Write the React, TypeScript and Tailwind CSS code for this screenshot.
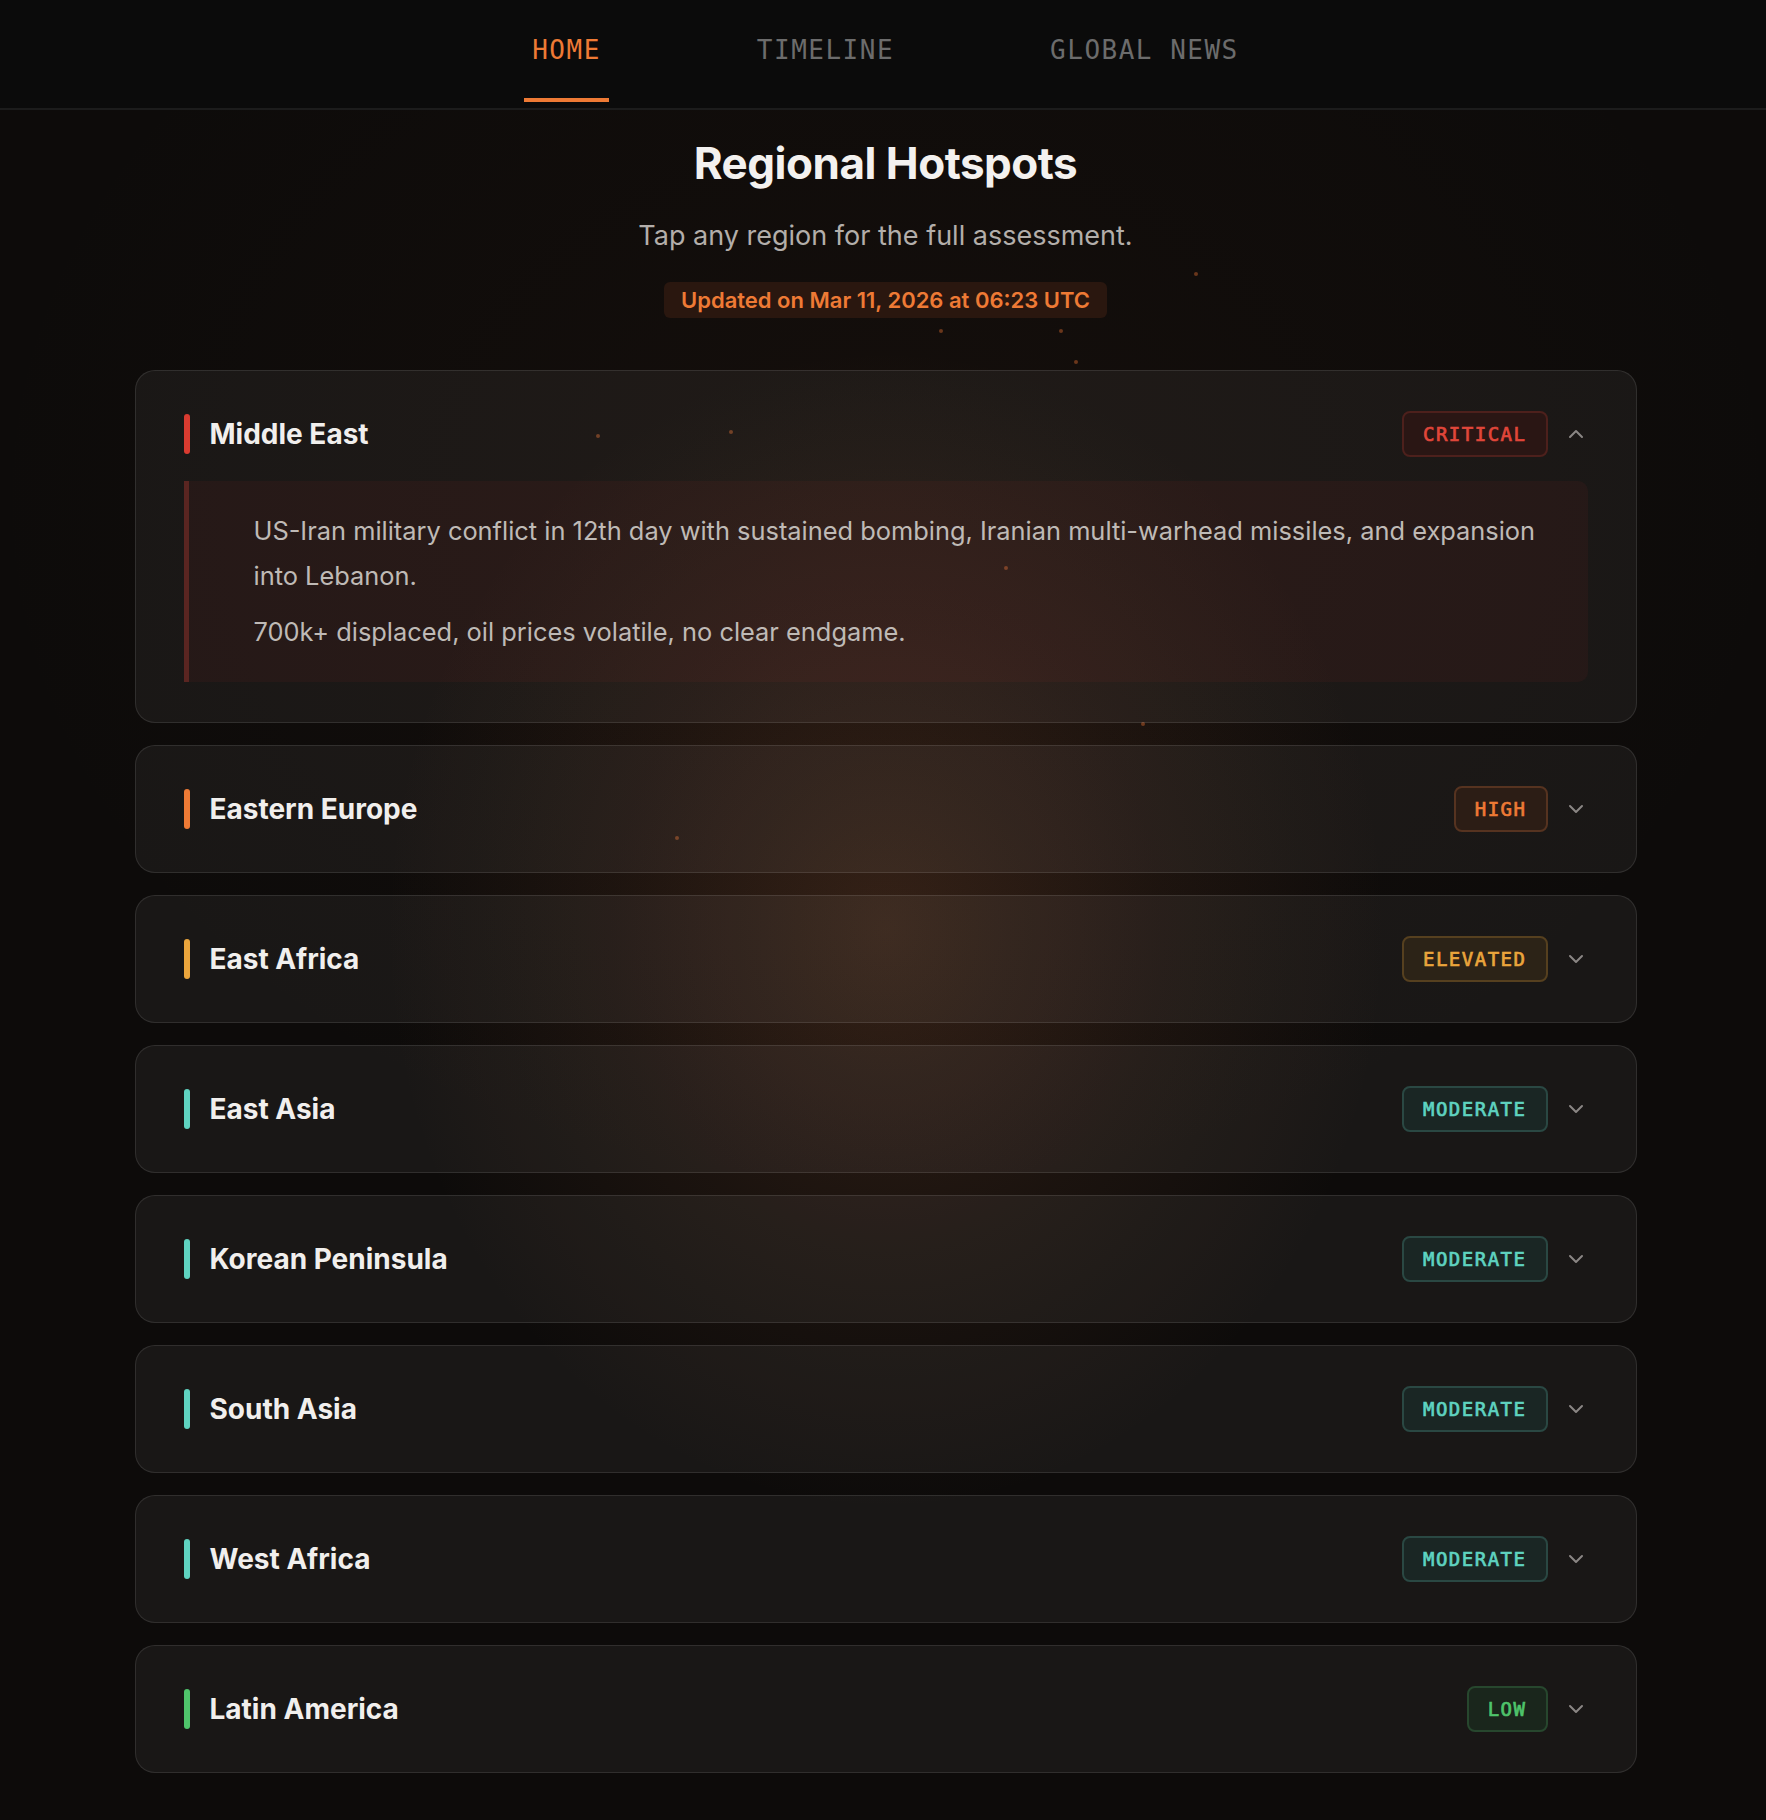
import { ChevronDown, ChevronUp } from "lucide-react";

type Level = "CRITICAL" | "HIGH" | "ELEVATED" | "MODERATE" | "LOW";

const levelStyles: Record<Level, { bar: string; badge: string }> = {
  CRITICAL: {
    bar: "bg-[#d93b30]",
    badge: "text-[#e0463a] border-[#4d201c] bg-[#2a1614]",
  },
  HIGH: {
    bar: "bg-[#ee7a35]",
    badge: "text-[#ee7a35] border-[#563320] bg-[#2c1d15]",
  },
  ELEVATED: {
    bar: "bg-[#eba53c]",
    badge: "text-[#eba53c] border-[#56401f] bg-[#2c2317]",
  },
  MODERATE: {
    bar: "bg-[#5fd3c0]",
    badge: "text-[#5fd3c0] border-[#2a4843] bg-[#1a2624]",
  },
  LOW: {
    bar: "bg-[#4fc46b]",
    badge: "text-[#4fc46b] border-[#27472e] bg-[#1a261c]",
  },
};

const regions: { name: string; level: Level; open?: boolean; body?: string[] }[] = [
  {
    name: "Middle East",
    level: "CRITICAL",
    open: true,
    body: [
      "US-Iran military conflict in 12th day with sustained bombing, Iranian multi-warhead missiles, and expansion into Lebanon.",
      "700k+ displaced, oil prices volatile, no clear endgame.",
    ],
  },
  { name: "Eastern Europe", level: "HIGH" },
  { name: "East Africa", level: "ELEVATED" },
  { name: "East Asia", level: "MODERATE" },
  { name: "Korean Peninsula", level: "MODERATE" },
  { name: "South Asia", level: "MODERATE" },
  { name: "West Africa", level: "MODERATE" },
  { name: "Latin America", level: "LOW" },
];

const tabs = [
  { label: "HOME", active: true },
  { label: "TIMELINE" },
  { label: "GLOBAL NEWS" },
];

// little embers floating over the page
const embers = [
  { x: 596, y: 434 },
  { x: 729, y: 430 },
  { x: 1004, y: 566 },
  { x: 675, y: 836 },
  { x: 1141, y: 722 },
  { x: 1194, y: 272 },
  { x: 939, y: 329 },
  { x: 1059, y: 329 },
  { x: 1074, y: 360 },
];

function RegionCard({ region }: { region: (typeof regions)[number] }) {
  const style = levelStyles[region.level];
  return (
    <div className="rounded-[20px] border border-white/[0.1] bg-white/[0.05] px-12 py-10">
      <div className="flex h-[46px] items-center">
        <span className={`h-10 w-[6px] rounded-full ${style.bar}`}></span>
        <h2 className="ml-5 flex-grow text-[28px] font-bold text-[#f1efed]">
          {region.name}
        </h2>
        <span
          className={`flex h-[46px] items-center rounded-lg border-2 px-[19px] font-['DejaVu_Sans_Mono',monospace] text-[19px] font-normal tracking-[1.5px] [-webkit-text-stroke:0.7px_currentColor] ${style.badge}`}
        >
          {region.level}
        </span>
        <span className="ml-4 text-[#8a8684]">
          {region.open ? (
            <ChevronUp size={24} strokeWidth={2} />
          ) : (
            <ChevronDown size={24} strokeWidth={2} />
          )}
        </span>
      </div>
      {region.open && region.body && (
        <div className="mt-[24px] rounded-r-[10px] border-l-[5px] border-[#5a2521] bg-[rgba(217,59,48,0.06)] pt-[27px] pb-[28px] pl-[65px] pr-[44px]">
          {region.body.map((p, i) => (
            <p
              key={i}
              className={`text-[25.4px] leading-[45px] text-[#bfbab6] ${i > 0 ? "mt-[11px]" : ""}`}
            >
              {p}
            </p>
          ))}
        </div>
      )}
    </div>
  );
}

export default function App() {
  return (
    <div className="relative min-h-screen overflow-hidden bg-[#0d0b0a] pl-[5px] font-['Inter','Noto_Sans',sans-serif]">
      {/* warm glow */}
      <div className="pointer-events-none absolute inset-0 bg-[radial-gradient(ellipse_500px_580px_at_886px_930px,rgba(170,100,62,0.24),rgba(170,100,62,0.09)_55%,transparent_100%)]"></div>
      <div className="pointer-events-none absolute inset-0 bg-[radial-gradient(ellipse_900px_700px_at_886px_500px,rgba(120,60,30,0.07),transparent_100%)]"></div>
      {embers.map((e, i) => (
        <span
          key={i}
          className="pointer-events-none absolute h-[4px] w-[4px] rounded-full bg-[#c2602c]/50"
          style={{ left: e.x, top: e.y }}
        ></span>
      ))}

      {/* Top tabs */}
      <nav className="relative -ml-[5px] flex h-[110px] justify-center gap-[140px] border-b-2 border-[#1c1c1c] bg-[#0b0b0b] pl-[5px]">
        {tabs.map((tab) => (
          <div key={tab.label} className="flex flex-col items-stretch justify-between pt-[34px] pb-[6px]">
            <span
              className={`px-2 text-center font-['DejaVu_Sans_Mono',monospace] text-[26px] leading-[32px] tracking-[1.5px] ${
                tab.active ? "text-[#ee7a35]" : "text-[#6c6c6c]"
              }`}
            >
              {tab.label}
            </span>
            <span className={`h-1 w-full ${tab.active ? "bg-[#ee7a35]" : "bg-transparent"}`}></span>
          </div>
        ))}
      </nav>

      <main className="relative flex flex-col items-center pb-[47px]">
        <h1 className="mt-[28px] text-[44px] font-bold leading-[50px] tracking-[-0.5px] text-[#f3f1ef]">
          Regional Hotspots
        </h1>
        <p className="mt-[32px] text-[27px] leading-[32px] text-[#b3aeaa]">
          Tap any region for the full assessment.
        </p>
        <div className="mt-[30px] rounded-md bg-[#2a170f] px-[17px] py-1 text-[22px] font-semibold leading-7 text-[#ee7a35]">
          Updated on Mar 11, 2026 at 06:23 UTC
        </div>

        <div className="mt-[52px] flex w-[1502px] flex-col gap-[22px]">
          {regions.map((r) => (
            <RegionCard key={r.name} region={r} />
          ))}
        </div>
      </main>
    </div>
  );
}
